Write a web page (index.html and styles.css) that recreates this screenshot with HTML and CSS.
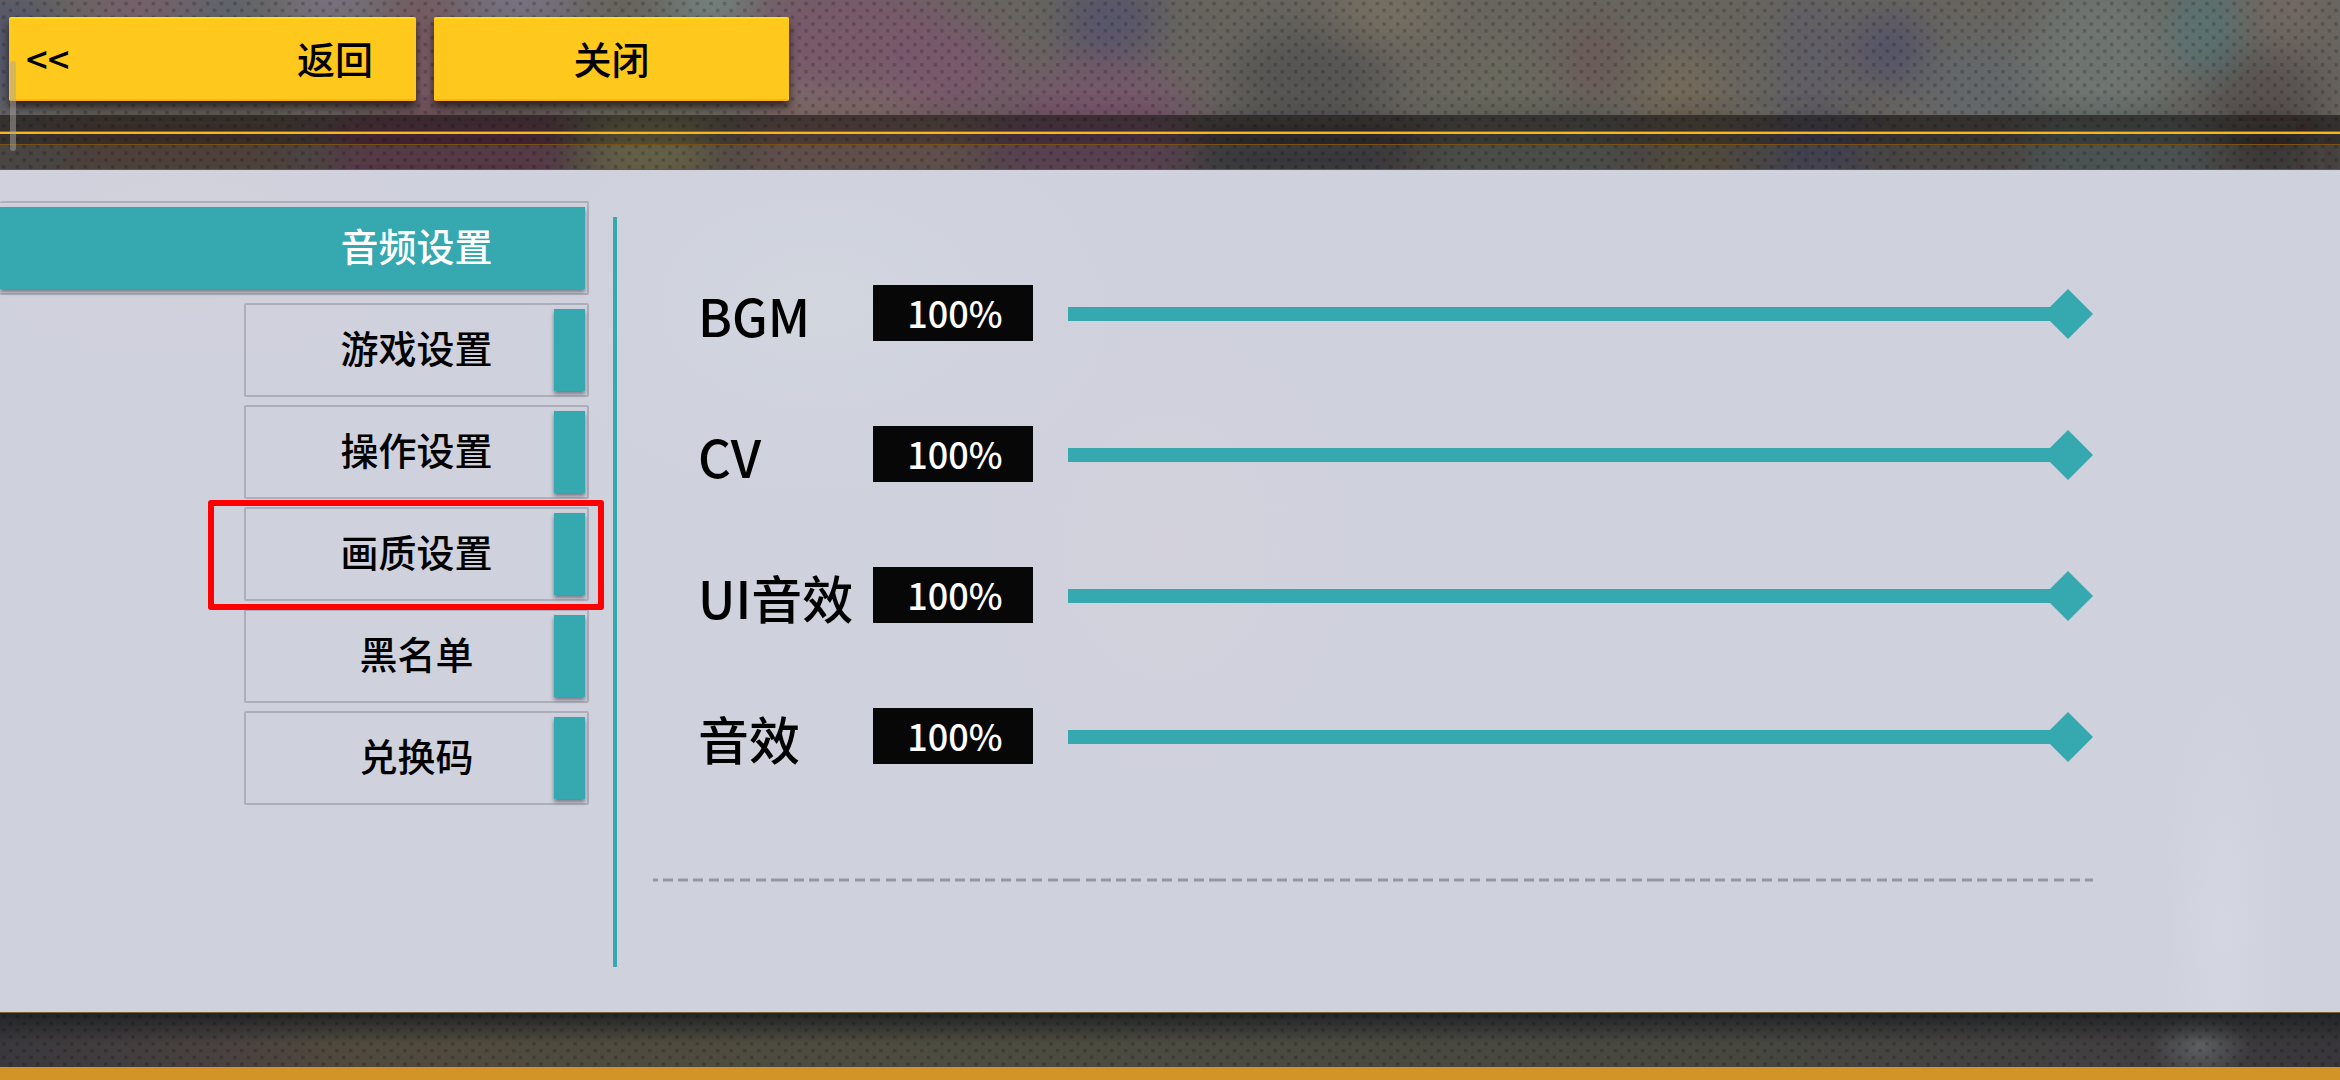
FILE: index.html
```
<!DOCTYPE html>
<html lang="zh-CN">
<head>
<meta charset="utf-8">
<title>音频设置</title>
<meta name="viewport" content="width=device-width, initial-scale=1">
<link rel="stylesheet" href="styles.css">
</head>
<body>
<div class="screen">
  <header class="topbar">
    <svg class="backdrop" viewBox="0 0 2340 170" preserveAspectRatio="none" aria-hidden="true">
      <defs>
        <filter id="soft" x="-50%" y="-50%" width="200%" height="200%"><feGaussianBlur stdDeviation="22 20"/></filter>
        <pattern id="dots" width="20" height="20" patternUnits="userSpaceOnUse" patternTransform="scale(.68)">
          <path d="M3 3h5v5h-5zM13 13h5v5h-5z" fill="#000" fill-opacity=".2"/>
        </pattern>
      </defs>
      <rect width="2340" height="170" fill="#68655f"/>
      <g filter="url(#soft)">
        <ellipse cx="10" cy="50" rx="50" ry="60" fill="#54566a"/>
        <ellipse cx="140" cy="10" rx="60" ry="30" fill="#77606c"/>
        <ellipse cx="225" cy="10" rx="40" ry="24" fill="#5b6470"/>
        <ellipse cx="330" cy="0" rx="50" ry="24" fill="#7d7488"/>
        <ellipse cx="425" cy="60" rx="44" ry="80" fill="#775a64"/>
        <ellipse cx="520" cy="0" rx="60" ry="24" fill="#7c7489"/>
        <ellipse cx="710" cy="0" rx="40" ry="30" fill="#768582"/>
        <ellipse cx="840" cy="120" rx="90" ry="50" fill="#80706a"/>
        <ellipse cx="850" cy="40" rx="110" ry="60" fill="#785a6b"/>
        <ellipse cx="950" cy="70" rx="60" ry="50" fill="#78596c"/>
        <ellipse cx="1100" cy="110" rx="90" ry="50" fill="#76586b"/>
        <ellipse cx="1110" cy="20" rx="50" ry="40" fill="#56546b"/>
        <ellipse cx="1310" cy="80" rx="80" ry="50" fill="#575452"/>
        <ellipse cx="1390" cy="10" rx="60" ry="30" fill="#777062"/>
        <ellipse cx="1500" cy="90" rx="60" ry="60" fill="#6a695f"/>
        <ellipse cx="1595" cy="60" rx="30" ry="40" fill="#6c5a57"/>
        <ellipse cx="1680" cy="90" rx="40" ry="40" fill="#746b5a"/>
        <ellipse cx="1810" cy="60" rx="30" ry="70" fill="#5e5d68"/>
        <ellipse cx="1890" cy="50" rx="34" ry="34" fill="#51506a"/>
        <ellipse cx="1980" cy="90" rx="60" ry="50" fill="#64676a"/>
        <ellipse cx="2100" cy="60" rx="70" ry="80" fill="#6e7571"/>
        <ellipse cx="2205" cy="25" rx="30" ry="50" fill="#577475"/>
        <ellipse cx="2265" cy="100" rx="60" ry="50" fill="#595150"/>
        <ellipse cx="2285" cy="10" rx="30" ry="40" fill="#756963"/>
      </g>
      <rect y="115" width="2340" height="55" fill="#35312f"/>
      <g filter="url(#soft)" opacity=".8">
        <rect x="60" y="125" width="240" height="60" fill="#3a2c20"/>
        <rect x="330" y="125" width="240" height="60" fill="#4a1c30"/>
        <rect x="590" y="125" width="120" height="60" fill="#615a35"/>
        <rect x="740" y="125" width="240" height="60" fill="#5a3f3a"/>
        <rect x="990" y="125" width="190" height="60" fill="#4f2944"/>
        <rect x="1200" y="135" width="210" height="50" fill="#1f1f23"/>
        <rect x="1440" y="125" width="180" height="60" fill="#393c38"/>
        <rect x="1650" y="125" width="90" height="60" fill="#3f3828"/>
        <rect x="1780" y="125" width="80" height="60" fill="#2c2c42"/>
        <rect x="2030" y="125" width="170" height="60" fill="#384646"/>
        <rect x="2230" y="135" width="80" height="50" fill="#1b1818"/>
      </g>
      <rect y="145" width="2340" height="25" fill="#fff" fill-opacity=".1"/>
      <rect width="2340" height="170" fill="url(#dots)"/>
      <rect y="131" width="2340" height="1" fill="#8a6416"/>
      <rect y="132" width="2340" height="2" fill="#fab41c"/>
      <rect y="144" width="2340" height="1" fill="#765217"/>
      <rect y="169" width="2340" height="1" fill="#6d5420"/>
    </svg>
    <button class="action back" type="button"><span>&lt;&lt;</span><span>返回</span></button>
    <button class="action close" type="button">关闭</button>
    <i class="handle"></i>
  </header>

  <main class="panel">
    <nav class="tabs" aria-label="设置">
      <button class="tab active" type="button">音频设置</button>
      <button class="tab" type="button">游戏设置</button>
      <button class="tab" type="button">操作设置</button>
      <button class="tab marked" type="button">画质设置</button>
      <button class="tab" type="button">黑名单</button>
      <button class="tab" type="button">兑换码</button>
    </nav>
    <section class="settings">
      <div class="row">
        <label for="bgm">BGM</label>
        <output for="bgm">100%</output>
        <input id="bgm" type="range" min="0" max="100" value="100">
      </div>
      <div class="row">
        <label for="cv">CV</label>
        <output for="cv">100%</output>
        <input id="cv" type="range" min="0" max="100" value="100">
      </div>
      <div class="row">
        <label for="ui">UI音效</label>
        <output for="ui">100%</output>
        <input id="ui" type="range" min="0" max="100" value="100">
      </div>
      <div class="row">
        <label for="sfx">音效</label>
        <output for="sfx">100%</output>
        <input id="sfx" type="range" min="0" max="100" value="100">
      </div>
      <svg class="dashes" aria-hidden="true"><line x1="0" y1="2" x2="100%" y2="2"/></svg>
    </section>
  </main>

  <footer class="bottom">
    <svg class="mesh" aria-hidden="true"><rect width="100%" height="100%" fill="url(#dots)"/></svg>
  </footer>
</div>
</body>
</html>
```
FILE: styles.css
```
:root {
  --teal: #35a8b0;
  --yellow: #ffc81c;
}

* { box-sizing: border-box; }

body {
  margin: 0;
  background: #353436;
  color: #000;
  font: 500 38px/56px "Noto Sans CJK SC", sans-serif;
}

button {
  border: 0;
  padding: 0;
  background: none;
  color: inherit;
  font: inherit;
}

.screen {
  display: flex;
  flex-direction: column;
  min-height: 100vh;
}

.topbar {
  position: relative;
  display: flex;
  align-items: flex-start;
  gap: 18px;
  height: 170px;
  padding: 17px 9px;
}

.backdrop {
  position: absolute;
  inset: 0;
  width: 100%;
  height: 100%;
}

.action {
  position: relative;
  height: 84px;
  padding-bottom: 2px;
  border: 2px solid #ffc81c;
  border-top-color: #ffdc14;
  border-bottom-color: #ffae1c;
  border-radius: 2px;
  background: var(--yellow);
  box-shadow: 0 6px 8px rgba(20, 12, 8, .7);
}

.back {
  display: flex;
  align-items: center;
  justify-content: space-between;
  width: 407px;
  padding: 0 41px 2px 15px;
}

.close { width: 355px; }

.handle {
  position: absolute;
  left: 10px;
  top: 61px;
  width: 6px;
  height: 90px;
  border-radius: 3px;
  background: rgba(170, 165, 155, .5);
}

.panel {
  flex: 1;
  display: flex;
  background:
    radial-gradient(ellipse 60px 240px at 95% 90%, rgba(220, 224, 232, .4), transparent),
    radial-gradient(ellipse 300px 200px at 35% 16%, rgba(214, 222, 226, .4), transparent),
    radial-gradient(ellipse 240px 300px at 50% 45%, rgba(216, 210, 218, .35), transparent),
    radial-gradient(ellipse 300px 160px at 8% 8%, rgba(214, 209, 219, .5), transparent),
    #cfd1dd;
}

.tabs {
  display: flex;
  flex-direction: column;
  align-items: flex-end;
  gap: 8px;
  width: 617px;
  margin: 47px 0 45px;
  padding-right: 24px;
  border-right: 4px solid var(--teal);
}

.tab {
  position: relative;
  width: 345px;
  height: 94px;
  padding-bottom: 6px;
  border: 2px solid #adaebb;
  border-radius: 2px;
}

.tab::after {
  content: "";
  position: absolute;
  top: 4px;
  right: 2px;
  width: 31px;
  height: 82px;
  background: var(--teal);
  box-shadow: 0 3px 4px rgba(60, 60, 70, .6);
}

.tabs .tab:first-child { margin-top: -16px; }

.active {
  width: 589px;
  padding-left: 246px;
  border-left: 0;
  color: #fff;
  isolation: isolate;
}

.active::after {
  left: 0;
  z-index: -1;
  width: auto;
}

.marked::before {
  content: "";
  position: absolute;
  inset: -9px -17px -11px -38px;
  z-index: 1;
  border: 6px solid #f00;
  border-radius: 3px;
}

.settings {
  flex: 1;
  display: flex;
  flex-direction: column;
  gap: 85px;
  padding: 115px 247px 0 36px;
}

.row {
  display: flex;
  align-items: center;
  height: 56px;
  padding-left: 45px;
}

label {
  width: 175px;
  padding-top: 4px;
  font-size: 51px;
  white-space: nowrap;
}

output {
  width: 160px;
  padding: 0 0 2px 4px;
  background: #070707;
  color: #fff;
  font-size: 36px;
  line-height: 54px;
  text-align: center;
}

input[type="range"] {
  flex: 1;
  min-width: 0;
  height: 50px;
  margin: 2px 0 0 35px;
  appearance: none;
  background: linear-gradient(var(--teal), var(--teal)) left / calc(100% - 25px) 14px no-repeat;
}

input[type="range"]::-webkit-slider-thumb {
  appearance: none;
  width: 50px;
  height: 50px;
  background: var(--teal);
  clip-path: polygon(50% 0, 100% 50%, 50% 100%, 0 50%);
}

.dashes {
  width: 100%;
  height: 4px;
  margin-top: 29px;
}

.dashes line {
  stroke: #95969f;
  stroke-width: 3px;
  stroke-dasharray: 17 6 10 5 10 5 10 5 10 6 10 5 10 6 10 6 10 5;
  stroke-dashoffset: 28px;
}

.bottom {
  height: 68px;
  border-top: 1px solid #7d6237;
  border-bottom: 13px solid #d29427;
  background:
    linear-gradient(#222426, rgba(34, 36, 38, 0) 30px),
    radial-gradient(ellipse 50px 40px at 94% 60%, #5d5f60, transparent),
    linear-gradient(90deg, #3a383d, #4a423f 10%, #504a3d 15%, #4d4c40 40%, #474740 75%, #423f40 90%, #38363a);
}

.mesh {
  display: block;
  width: 100%;
  height: 54px;
}
```
